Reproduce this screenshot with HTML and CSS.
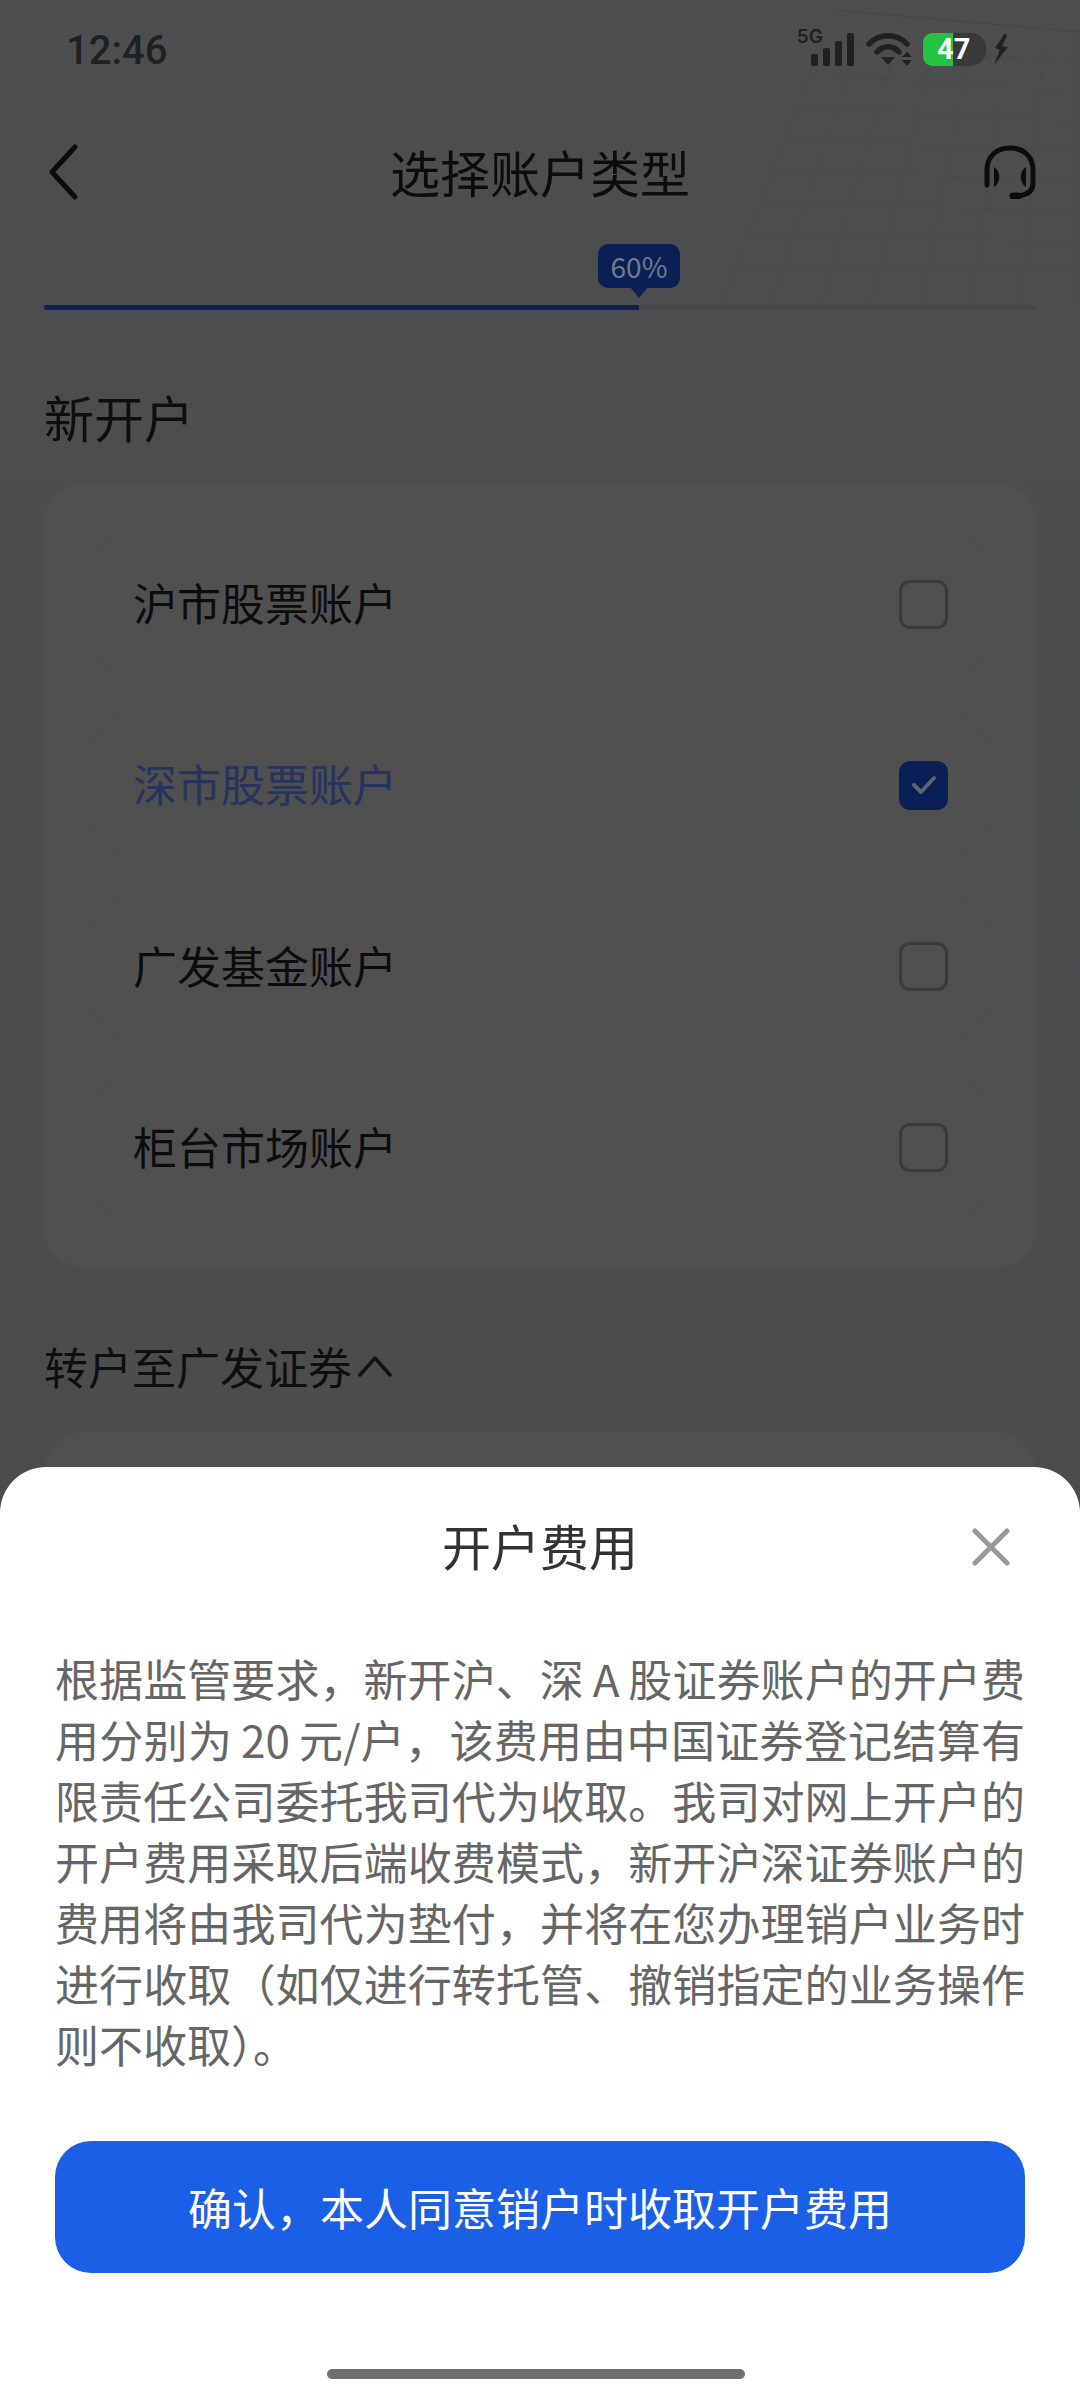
FILE: index.html
```html
<!DOCTYPE html>
<html>
<head>
	<meta charset="UTF-8">
	<title>选择账户类型</title>
	<link rel="stylesheet" href="styles.css">
</head>

<body>
<div class="page">
	<svg class="bgGrid" width="380" height="306" viewBox="0 0 380 306" fill="none" stroke="#4a4b4d" stroke-width="1">
		<path d="M135 10L380 32" stroke="#464749"/>
		<path d="M135 10L20 306"/>
		<path d="M122 42L380 62M110 74L380 92M98 106L380 122M86 138L380 152M74 170L380 182M62 202L380 212M50 234L380 242M38 266L380 272"/>
		<path d="M170 14L70 306M205 17L120 306M240 20L170 306M275 23L220 306M310 26L270 306M345 29L320 306M378 32L372 306"/>
	</svg>

	<div class="statusBar">
		<span class="time">12:46</span>
		<div class="statusIcons">
			<span class="fiveG">5G</span>
			<svg class="signal" width="43" height="33" viewBox="0 0 43 33" fill="#1f2022">
				<rect x="0" y="21" width="7" height="12" rx="2"/>
				<rect x="12" y="15" width="7" height="18" rx="2"/>
				<rect x="24" y="8" width="7" height="25" rx="2"/>
				<rect x="36" y="0" width="7" height="33" rx="2"/>
			</svg>
			<svg class="wifi" width="47" height="33" viewBox="0 0 47 33" fill="none" stroke="#1f2022" stroke-width="5.5" stroke-linecap="round">
				<path d="M3 11C13 0 31 0 41 11"/>
				<path d="M11 19C17 12 27 12 33 19"/>
				<path d="M15 24H29L22 32Z" fill="#1f2022" stroke="none"/>
				<path d="M41 19L46 24H36ZM41 33L46 27H36Z" fill="#1f2022" stroke="none"/>
			</svg>
			<div class="battery">
				<div class="batteryFill"></div>
				<span class="batteryText">47</span>
			</div>
			<svg class="bolt" width="15" height="33" viewBox="0 0 15 33" fill="#1f2022">
				<path d="M11 0L1 15L6 17L0 32L14 14L8 13L13 3Z"/>
			</svg>
		</div>
	</div>

	<div class="navBar">
		<svg class="navBack" width="32" height="56" viewBox="0 0 32 56" fill="none" stroke="#0c0c0d" stroke-width="5" stroke-linecap="round" stroke-linejoin="round">
			<path d="M28 3L5 28L28 53"/>
		</svg>
		<h1 class="navTitle">选择账户类型</h1>
		<svg class="navService" width="52" height="54" viewBox="0 0 52 54" fill="none" stroke="#0c0c0d" stroke-width="5" stroke-linecap="round">
			<path d="M3 40V25C3 11 13 3 26 3C39 3 49 11 49 25V38C49 46 43 50 34 51"/>
			<path d="M29 51H34" stroke-width="7"/>
			<path d="M10 22C17 26 17 38 10 42Z" fill="#0c0c0d" stroke="none"/>
			<path d="M42 22C35 26 35 38 42 42Z" fill="#0c0c0d" stroke="none"/>
		</svg>
	</div>

	<div class="progress">
		<div class="progressBubble">60%</div>
		<div class="progressBar"></div>
	</div>

	<h2 class="sectionTitle">新开户</h2>
	<div class="card">
		<div class="cardRow"><span>沪市股票账户</span><i class="box"></i></div>
		<div class="cardRow active"><span>深市股票账户</span>
			<i class="box checked">
				<svg width="26" height="20" viewBox="0 0 26 20" fill="none" stroke="#5d6474" stroke-width="4" stroke-linecap="round" stroke-linejoin="round"><path d="M3 10L10 17L23 3"/></svg>
			</i>
		</div>
		<div class="cardRow"><span>广发基金账户</span><i class="box"></i></div>
		<div class="cardRow"><span>柜台市场账户</span><i class="box"></i></div>
	</div>

	<h2 class="sectionTitle second">转户至广发证券
		<svg width="34" height="22" viewBox="0 0 34 22" fill="none" stroke="#111" stroke-width="3.5" stroke-linecap="round" stroke-linejoin="round"><path d="M2 20L17 3L32 20"/></svg>
	</h2>
	<div class="card cardLast"></div>

	<div class="sheet">
		<div class="sheetHead">
			<h3 class="sheetTitle">开户费用</h3>
			<svg class="sheetClose" width="38" height="38" viewBox="0 0 38 38" fill="none" stroke="#999" stroke-width="5" stroke-linecap="round"><path d="M3 3L35 35M35 3L3 35"/></svg>
		</div>
		<div class="sheetText">
			<p class="line">根据监管要求&#xFF0C;新开沪、深&#x2009;A&#x2009;股证券账户的开户费</p>
			<p class="line">用分别为&#x2009;20&#x2009;元/户&#xFF0C;该费用由中国证券登记结算有</p>
			<p class="line">限责任公司委托我司代为收取。我司对网上开户的</p>
			<p class="line">开户费用采取后端收费模式&#xFF0C;新开沪深证券账户的</p>
			<p class="line">费用将由我司代为垫付&#xFF0C;并将在您办理销户业务时</p>
			<p class="line">进行收取&#xFF08;如仅进行转托管、撤销指定的业务操作</p>
			<p class="lineEnd">则不收取&#xFF09;。</p>
		</div>
		<button class="sheetBtn">确认&#xFF0C;本人同意销户时收取开户费用</button>
		<div class="homeBar"></div>
	</div>
</div>
</body>
</html>
```

FILE: styles.css
```css
* {
	box-sizing: border-box;
}
html, body {
	margin: 0;
	padding: 0;
}
body {
	width: 1080px;
	height: 2400px;
	overflow: hidden;
	font-family: "Noto Sans CJK SC", "Noto Sans", sans-serif;
	background-color: #4d4e50;
}
h1, h2, h3, p {
	margin: 0;
	font-weight: normal;
}
.page {
	position: relative;
	width: 1080px;
	height: 2400px;
	padding: 0 44px;
	background: linear-gradient(#4d4e50, #4b4b4b);
}
.bgGrid {
	position: absolute;
	top: 0;
	right: 0;
}

/* status bar */
.statusBar {
	position: relative;
	height: 100px;
	display: flex;
	justify-content: space-between;
	align-items: center;
	padding: 0 27px 0 22px;
}
.time {
	font-family: Roboto, sans-serif;
	font-size: 40px;
	font-weight: 500;
	color: #1f2022;
}
.statusIcons {
	display: flex;
	align-items: flex-end;
	height: 33px;
	margin-top: -1px;
}
.fiveG {
	font-family: Inter, sans-serif;
	font-size: 19px;
	font-weight: 600;
	line-height: 18px;
	color: #1f2022;
	align-self: flex-start;
	margin-top: -5px;
	margin-right: -12px;
}
.signal {
	margin-right: 12px;
}
.wifi {
	margin-right: 10px;
}
.battery {
	position: relative;
	width: 63px;
	height: 33px;
	border-radius: 9px 15px 15px 9px;
	background-color: #39393b;
	overflow: hidden;
}
.batteryFill {
	width: 30px;
	height: 33px;
	background-color: #25c343;
}
.batteryText {
	position: absolute;
	top: 0;
	left: 14px;
	font-family: Roboto, sans-serif;
	font-size: 29px;
	font-weight: 700;
	line-height: 33px;
	color: #fff;
}
.bolt {
	margin-left: 8px;
}

/* nav */
.navBar {
	position: relative;
	height: 144px;
	display: flex;
	justify-content: space-between;
	align-items: center;
	padding: 0 0 0 3px;
}
.navTitle {
	position: absolute;
	left: 0;
	right: 0;
	top: 0;
	text-align: center;
	font-size: 50px;
	line-height: 142px;
	color: #0c0c0d;
}

/* progress */
.progress {
	position: relative;
	height: 66px;
	display: flex;
	align-items: flex-end;
}
.progressBubble {
	position: absolute;
	left: 554px;
	top: 0;
	width: 82px;
	height: 44px;
	border-radius: 10px;
	background-color: #0a2054;
	color: #6f7a92;
	font-size: 28px;
	line-height: 44px;
	text-align: center;
}
.progressBubble::after {
	content: "";
	position: absolute;
	left: 32px;
	top: 43px;
	border-left: 9px solid transparent;
	border-right: 9px solid transparent;
	border-top: 11px solid #0a2054;
}
.progressBar {
	width: 100%;
	height: 5px;
	border-radius: 3px;
	background: linear-gradient(to right, #0a2054 60%, #47484a 60%);
}

/* sections */
.sectionTitle {
	margin-top: 72px;
	font-size: 50px;
	line-height: 68px;
	color: #0e0e0f;
}
.second {
	margin-top: 68px;
	font-size: 44px;
	line-height: 62px;
	display: flex;
	align-items: center;
	gap: 6px;
}
.card {
	margin-top: 33px;
	height: 784px;
	padding: 51px 50px 0;
	border-radius: 40px;
	background-color: #505051;
	display: flex;
	flex-direction: column;
	gap: 41.3px;
}
.cardLast {
	margin-top: 35px;
	height: 200px;
	padding: 0;
}
.cardRow {
	flex: none;
	height: 140px;
	display: flex;
	justify-content: space-between;
	align-items: center;
	padding: 0 37px 0 38px;
	border: 1px solid #4e4e4f;
	border-radius: 30px;
	font-size: 44px;
	color: #0c0c0d;
}
.cardRow span {
	margin-bottom: 4px;
}
.active {
	color: #26345f;
}
.box {
	width: 49px;
	height: 49px;
	border: 3px solid #3a3a3b;
	border-radius: 11px;
	display: flex;
	justify-content: center;
	align-items: center;
}
.checked {
	border: none;
	background-color: #0a2054;
}

/* sheet */
.sheet {
	position: absolute;
	left: 0;
	top: 1467px;
	width: 1080px;
	height: 933px;
	padding: 0 55px;
	border-radius: 46px 46px 0 0;
	background-color: #fff;
}
.sheetHead {
	position: relative;
	height: 160px;
	text-align: center;
}
.sheetTitle {
	font-size: 49px;
	line-height: 156px;
	color: #333;
}
.sheetClose {
	position: absolute;
	top: 61px;
	right: 15px;
}
.sheetText {
	margin-top: 21px;
	font-size: 44px;
	line-height: 61px;
	color: #666;
}
.line {
	text-align: justify;
	text-align-last: justify;
}
.sheetBtn {
	display: block;
	width: 970px;
	height: 132px;
	margin-top: 66px;
	border: none;
	border-radius: 36px;
	background-color: #1a5fe6;
	color: #fff;
	font-family: inherit;
	font-size: 44px;
}
.homeBar {
	position: absolute;
	left: 327px;
	bottom: 21px;
	width: 418px;
	height: 10px;
	border-radius: 5px;
	background-color: #6e6e6e;
}
```
